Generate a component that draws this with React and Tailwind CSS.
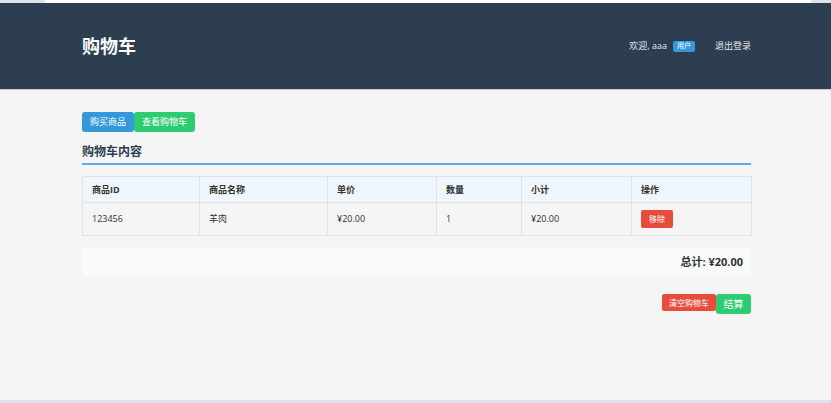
const cols = [
  { label: "商品ID", w: "w-[117px]" },
  { label: "商品名称", w: "w-[128px]" },
  { label: "单价", w: "w-[109px]" },
  { label: "数量", w: "w-[85px]" },
  { label: "小计", w: "w-[110px]" },
  { label: "操作", w: "w-[120px]" },
];

const items = [{ id: "123456", name: "羊肉", price: "¥20.00", qty: 1, subtotal: "¥20.00" }];

export default function App() {
  return (
    <div
      className="h-[403px] flex flex-col bg-[#f5f5f5] text-[#333]"
      style={{ fontFamily: '"Open Sans", "Noto Sans CJK SC", sans-serif' }}
    >
      {/* window strip */}
      <div className="h-[3px] bg-[#dde3ea] flex">
        <div className="ml-[45px] w-[766px] bg-white" />
      </div>

      <header className="h-[87px] bg-[#2c3e50] border-b border-[#c8cbd0] flex items-center justify-between pl-[82px] pr-[80px]">
        <h1 className="text-[18px] font-bold text-white leading-none">购物车</h1>
        <div className="flex items-center text-[9px] text-[#e6e9ec]">
          <span>欢迎, aaa</span>
          <span className="ml-[6px] bg-[#3498db] text-white text-[7px] px-[4px] h-[11px] flex items-center rounded-[2px]">用户</span>
          <span className="ml-[20px]">退出登录</span>
        </div>
      </header>

      <main className="flex-1 pl-[82px] pr-[80px] pt-[22px]">
        <div className="flex">
          <button className="h-[20px] px-[8px] bg-[#3498db] text-white text-[9px] rounded-[3px]">购买商品</button>
          <button className="h-[20px] px-[8px] bg-[#2ecc71] text-white text-[9px] rounded-[3px]">查看购物车</button>
        </div>

        <h2 className="mt-[12px] text-[12px] font-bold text-[#2c3e50] pb-[3px] border-b-2 border-[#5dade2] leading-[16px]">
          购物车内容
        </h2>

        <table className="mt-[11px] w-[669px] border-collapse text-[9px] table-fixed">
          <thead>
            <tr className="h-[26px] bg-[#f0f6fd]">
              {cols.map((c) => (
                <th key={c.label} className={`${c.w} border border-[#dfe2e6] text-left font-bold pl-[9px]`}>
                  {c.label}
                </th>
              ))}
            </tr>
          </thead>
          <tbody>
            {items.map((it) => (
              <tr key={it.id} className="h-[33px]">
                <td className="border border-[#dfe2e6] pl-[9px]">{it.id}</td>
                <td className="border border-[#dfe2e6] pl-[9px]">{it.name}</td>
                <td className="border border-[#dfe2e6] pl-[9px]">{it.price}</td>
                <td className="border border-[#dfe2e6] pl-[9px]">{it.qty}</td>
                <td className="border border-[#dfe2e6] pl-[9px]">{it.subtotal}</td>
                <td className="border border-[#dfe2e6] pl-[9px]">
                  <button className="h-[18px] w-[32px] bg-[#e74c3c] text-white text-[8px] rounded-[2px]">移除</button>
                </td>
              </tr>
            ))}
          </tbody>
        </table>

        <div className="mt-[12px] h-[28px] bg-[#f9fafb] rounded-[3px] flex items-center justify-end pr-[8px]">
          <span className="text-[11px] font-bold text-[#333]">总计: ¥20.00</span>
        </div>

        <div className="mt-[18px] flex justify-end items-start">
          <button className="h-[17px] px-[7px] bg-[#e74c3c] text-white text-[8px] rounded-[2px]">清空购物车</button>
          <button className="h-[20px] w-[35px] bg-[#2ecc71] text-white text-[10px] rounded-[3px]">结算</button>
        </div>
      </main>

      <div className="h-[3px] bg-[#dbe1ee]" />
    </div>
  );
}
